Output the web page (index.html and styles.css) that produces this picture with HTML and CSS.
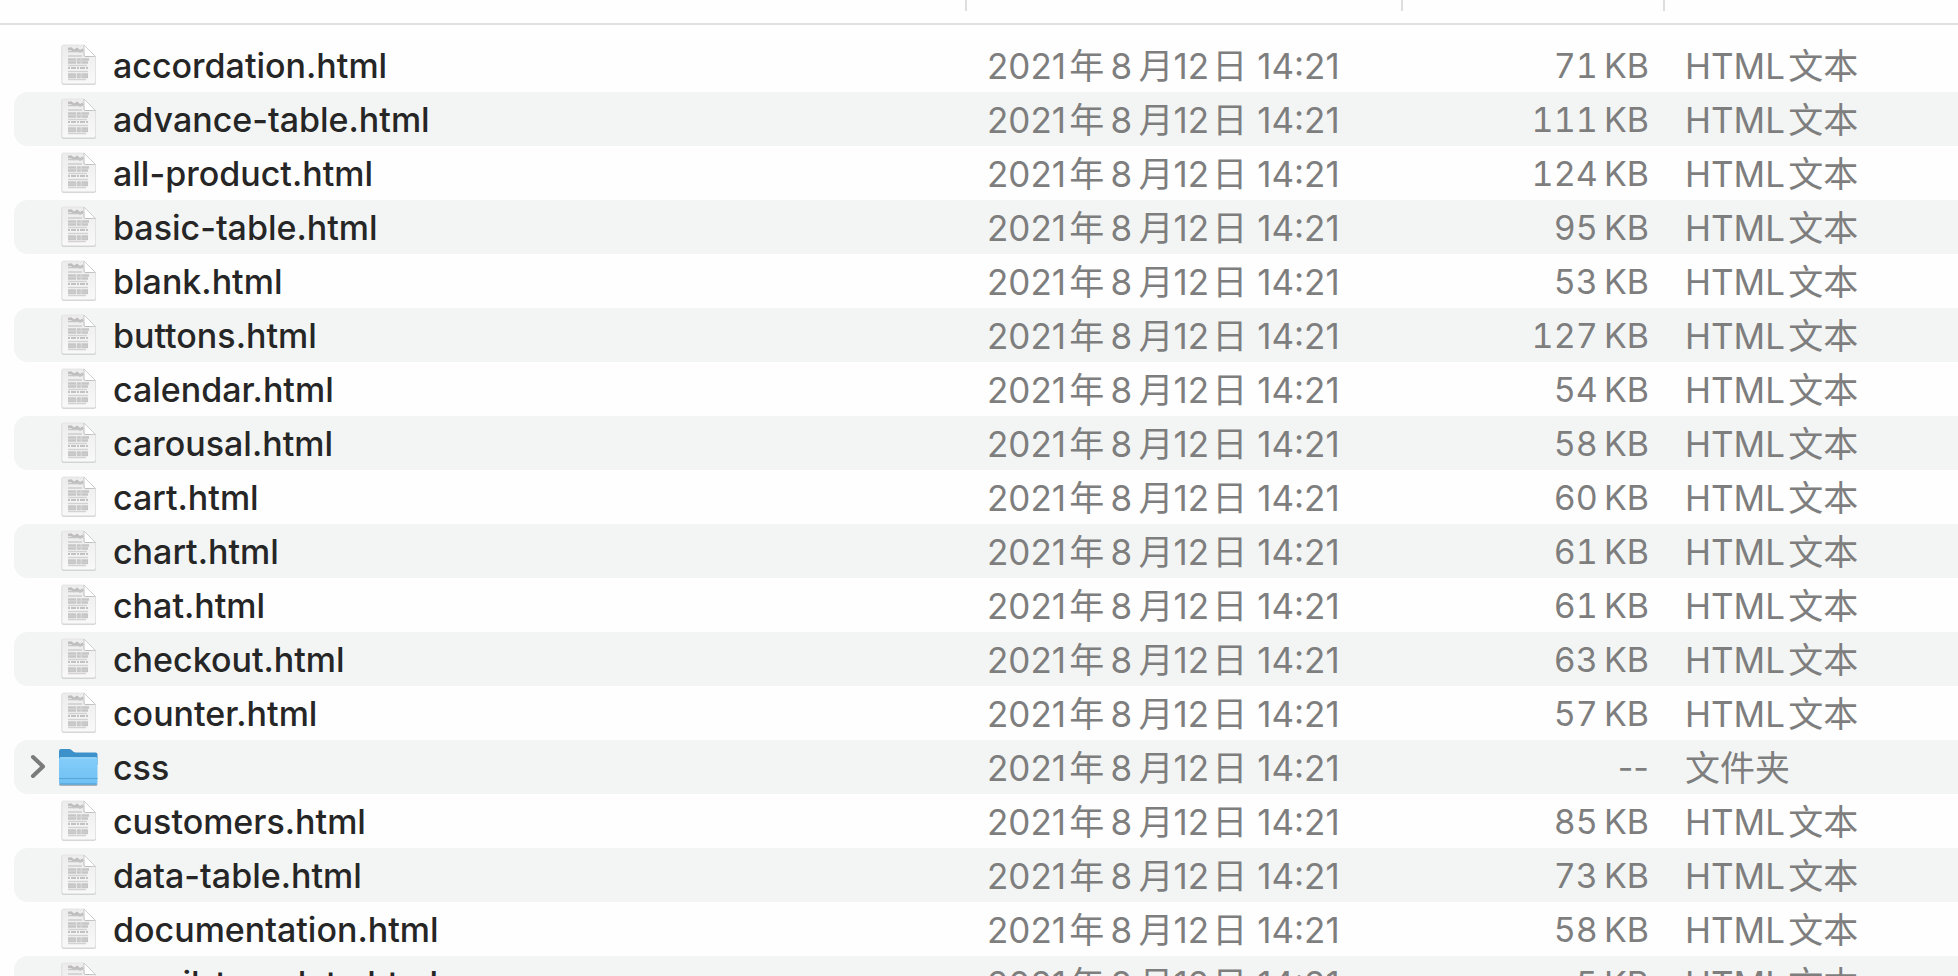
FILE: index.html
```
<!DOCTYPE html>
<html lang="zh-CN">
  <head>
    <meta charset="UTF-8" />
    <meta name="viewport" content="width=device-width, initial-scale=1.0" />
    <title>Files</title>
    <link rel="stylesheet" href="styles.css">
  </head>
  <body>
    <svg class="icon-defs" aria-hidden="true">
      <defs>
        <linearGradient id="page-fill" x1="0" y1="0" x2="0" y2="1">
          <stop offset="0" stop-color="#ececec" />
          <stop offset="1" stop-color="#f9f9f9" />
        </linearGradient>
        <linearGradient id="fold-shade" x1="0" y1="1" x2="1" y2="0">
          <stop offset="0" stop-color="#b5b5b5" />
          <stop offset="1" stop-color="#e6e6e6" />
        </linearGradient>
        <linearGradient id="folder-fill" x1="0" y1="0" x2="0" y2="1">
          <stop offset="0" stop-color="#83cdf9" />
          <stop offset="1" stop-color="#6fc0f3" />
        </linearGradient>
      </defs>
      <symbol id="icon-file" viewBox="0 0 40 44">
        <path d="M4 2.500H26L38 14V39.500Q38 42 35.500 42H6Q3.500 42 3.500 39.500V4Z" fill="#b8b8b8" opacity=".6" />
        <path d="M5 2H26L37.500 13.500V38.500Q37.500 40.800 35.500 40.800H6Q4 40.800 4 38.500V3.500Q4 2 5 2Z" fill="url(#page-fill)" stroke="#e2e2e2" stroke-width=".8" />
        <path d="M26 2V12Q26 13.500 27.500 13.500H37.500Z" fill="#fff" stroke="url(#fold-shade)" />
        <path d="M10 6L13 5.500L16 8L19 6L22 8.500L25 6.500" fill="none" stroke="#bdbdbd" stroke-width="2.400" />
        <path d="M10 8.500H25" stroke="#c6c6c6" stroke-width="1.500" />
        <path d="M10 13H24" stroke="#cdcdcd" stroke-width="1.500" />
        <path d="M10 16.500H31M10 19.500H30M10 34H30M10 31.500H30" stroke="#c6c6c6" stroke-width="2.300" stroke-dasharray="8 .8 4 .6" />
        <path d="M10 25H31" stroke="#c2c2c2" stroke-width="2" stroke-dasharray="2 1 5 1" />
        <path d="M10 22.500H29M10 28.500H30M10 36.500H28" stroke="#d2d2d2" stroke-width="1.500" />
        <path d="M10 18H30M10 33H29" stroke="#d0d0d0" />
      </symbol>
      <symbol id="icon-folder" viewBox="0 0 40 44">
        <path d="M1 38.500H39.500V39.500Q39.500 41 37.500 41H3Q1 41 1 39.500Z" fill="#a9b4bb" />
        <path d="M1 6Q1 4 3 4H11Q12.500 4 13.500 5L15.500 6.700Q16.500 7.500 18 7.500H37.500Q39.500 7.500 39.500 9.500V20H1Z" fill="#3d91cb" />
        <path d="M1 14Q1 12.500 2.500 12.500H38Q39.500 12.500 39.500 14V37.500Q39.500 39.500 37.500 39.500H3Q1 39.500 1 37.500Z" fill="url(#folder-fill)" />
        <path d="M2 12.800H38.500" stroke="#a5dcfc" />
        <path d="M1 33.500H39.500" stroke="#57a6d9" />
        <path d="M2 39H38.500" stroke="#4d9ace" />
      </symbol>
    </svg>

    <table class="file-table">
      <colgroup>
        <col class="col-name">
        <col class="col-date">
        <col class="col-size">
        <col class="col-kind">
      </colgroup>
      <thead>
        <tr>
          <td><div class="divider"></div></td>
          <td><div class="divider"></div></td>
          <td><div class="divider"></div></td>
          <td></td>
        </tr>
      </thead>
      <tbody id="file-list"></tbody>
    </table>

    <script>
      // single digit month gets a thin space on both sides
      const modified = "2021\u200a年\u20098\u2009月12\u200a日 14:21";

      const files = [
        { name: "accordation.html", size: "71" },
        { name: "advance-table.html", size: "111" },
        { name: "all-product.html", size: "124" },
        { name: "basic-table.html", size: "95" },
        { name: "blank.html", size: "53" },
        { name: "buttons.html", size: "127" },
        { name: "calendar.html", size: "54" },
        { name: "carousal.html", size: "58" },
        { name: "cart.html", size: "60" },
        { name: "chart.html", size: "61" },
        { name: "chat.html", size: "61" },
        { name: "checkout.html", size: "63" },
        { name: "counter.html", size: "57" },
        { name: "css", folder: true },
        { name: "customers.html", size: "85" },
        { name: "data-table.html", size: "73" },
        { name: "documentation.html", size: "58" },
        { name: "email-template.html", size: "5" },
      ];

      const arrow = `
        <button class="toggle" type="button" aria-label="css">
          <svg viewBox="0 0 16 26"><path d="M3 3L13 12.500L3 22" /></svg>
        </button>`;

      function displayFiles() {
        const tbody = document.getElementById("file-list");

        files.forEach((file) => {
          const row = document.createElement("tr");
          row.innerHTML = `
            <td class="name">
              <div class="name-cell">
                <div class="toggle-slot">${file.folder ? arrow : ""}</div>
                <svg class="icon"><use href="#${file.folder ? "icon-folder" : "icon-file"}" /></svg>
                <span class="label">${file.name}</span>
              </div>
            </td>
            <td class="date">${modified}</td>
            <td class="${file.folder ? "size empty" : "size"}">${file.folder ? "--" : file.size + "\u2009KB"}</td>
            <td class="kind">${file.folder ? "文件夹" : "HTML\u200a文本"}</td>`;
          tbody.appendChild(row);
        });
      }

      displayFiles();
    </script>
  </body>
</html>
```
FILE: styles.css
```
body {
  margin: 0;
  height: 100vh;
  overflow: hidden;
  background-color: #fefefe;
  color: #262626;
  font-family: Inter, "Noto Sans CJK SC", sans-serif;
  font-size: 34px;
  line-height: 52px;
}
.icon-defs {
  position: absolute;
  width: 0;
  height: 0;
}
.file-table {
  width: 100%;
  table-layout: fixed;
  border-collapse: separate;
  border-spacing: 0;
}
.col-date {
  width: 436px;
}
.col-size {
  width: 262px;
}
.col-kind {
  width: 293px;
}
td {
  padding: 0;
  white-space: nowrap;
}
thead td {
  height: 23px;
  vertical-align: top;
  border-bottom: 2px solid #e0e0e0;
}
.divider {
  height: 11px;
  border-right: 2px solid #dedede;
}
tbody::before {
  content: "";
  display: block;
  height: 13px;
}
tbody td {
  height: 52px;
  padding-top: 2px;
  color: #7e7e7e;
}
tbody tr:nth-child(even) td,
tbody tr:nth-child(even) .name-cell {
  background-color: #f3f5f4;
}
tbody tr:nth-child(even) .name {
  background-color: transparent;
}
tbody .name {
  padding: 0 0 0 14px;
}
.name-cell {
  display: flex;
  align-items: center;
  height: 54px;
  border-radius: 14px 0 0 14px;
  color: #262626;
}
.toggle-slot {
  display: flex;
  align-items: center;
  width: 44px;
  height: 54px;
}
.toggle {
  display: flex;
  margin-left: 16px;
  padding: 0;
  border: none;
  background: none;
  cursor: pointer;
}
.toggle svg {
  width: 16px;
  height: 26px;
  fill: none;
  stroke: #7b7b7b;
  stroke-width: 4;
  stroke-linecap: round;
  stroke-linejoin: round;
}
.icon {
  width: 40px;
  height: 44px;
  margin-right: 15px;
}
.label {
  padding-top: 2px;
  font-weight: 500;
}
.date,
.kind {
  padding-left: 20px;
  font-size: 35px;
}
.size {
  padding-right: 16px;
  text-align: right;
  font-variant-numeric: tabular-nums;
}
.size.empty {
  font-variant-numeric: normal;
}
```
